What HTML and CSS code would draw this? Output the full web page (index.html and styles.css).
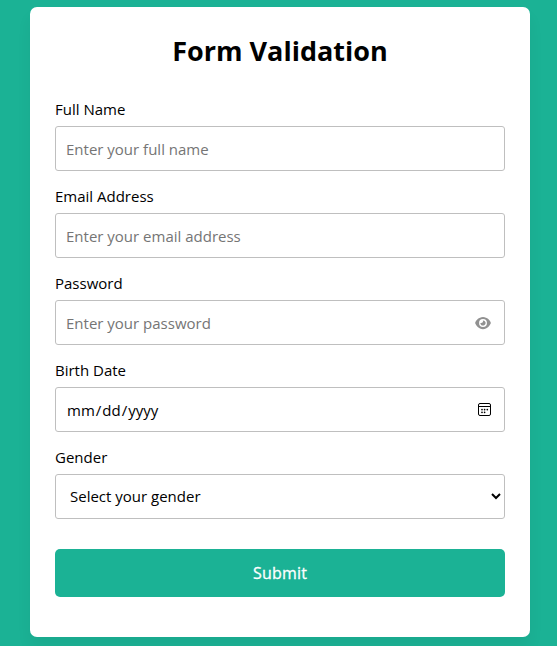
FILE: index.html
```html
<!DOCTYPE html>
<html lang="en">
<head>
<meta charset="utf-8">
<title>Form Validation</title>
<link rel="stylesheet" href="styles.css">
</head>
<body>
<form class="form" novalidate>
  <h2 class="title">Form Validation</h2>
  <div class="group">
    <label for="fullname">Full Name</label>
    <input type="text" id="fullname" placeholder="Enter your full name">
  </div>
  <div class="group">
    <label for="email">Email Address</label>
    <input type="text" id="email" placeholder="Enter your email address">
  </div>
  <div class="group">
    <label for="password">Password</label>
    <div class="field">
      <input type="password" id="password" placeholder="Enter your password">
      <svg class="eye" viewBox="0 0 576 512"><path fill="currentColor" d="M288 32c-80.800 0-145.500 36.800-192.600 80.600C48.600 156 17.300 208 2.500 243.700c-3.300 7.900-3.300 16.700 0 24.600C17.300 304 48.600 356 95.400 399.400 142.500 443.200 207.200 480 288 480s145.500-36.800 192.600-80.600c46.800-43.500 78.100-95.400 93-131.100 3.300-7.900 3.300-16.700 0-24.600-14.900-35.700-46.200-87.700-93-131.100C433.500 68.800 368.800 32 288 32zM144 256a144 144 0 1 1 288 0 144 144 0 1 1-288 0zm144-64c0 35.300-28.700 64-64 64-7.100 0-13.900-1.200-20.300-3.300-5.500-1.800-11.900 1.600-11.700 7.400.3 6.900 1.300 13.800 3.200 20.700 13.700 51.200 66.400 81.600 117.600 67.900s81.600-66.400 67.900-117.600c-11.100-41.500-47.800-69.400-88.600-71.100-5.800-.2-9.200 6.100-7.400 11.700 2.100 6.400 3.300 13.200 3.300 20.300z"/></svg>
    </div>
  </div>
  <div class="group">
    <label for="date">Birth Date</label>
    <div class="control date" id="date">
      <span class="parts"><span class="part">mm</span>/<span class="part">dd</span>/<span class="part">yyyy</span></span>
      <svg class="calendar" viewBox="0 0 13 13"><rect x=".5" y=".5" width="12" height="12" rx="1.500" fill="none" stroke="currentColor"/><path d="M1 3.500h11" stroke="currentColor"/><g fill="currentColor"><circle cx="4" cy="6.600" r=".85"/><circle cx="6.600" cy="6.600" r=".85"/><circle cx="9.300" cy="6.600" r=".85"/><circle cx="4" cy="9.300" r=".85"/><circle cx="6.600" cy="9.300" r=".85"/></g></svg>
    </div>
  </div>
  <div class="group">
    <label for="gender">Gender</label>
    <select id="gender"><option>Select your gender</option><option>Male</option><option>Female</option><option>Other</option></select>
  </div>
  <button class="submit" type="button">Submit</button>
</form>
</body>
</html>
```
FILE: styles.css
```css
* { box-sizing: border-box; margin: 0; padding: 0; font-family: "Open Sans", sans-serif; }
body { background: #1bb295; padding: 7px 0 0 30px; min-height: 100vh; }
.form { width: 500px; height: 630px; padding: 25px; background: #fff; border-radius: 7px; box-shadow: 0 10px 15px rgba(0,0,0,.05); }
.title { font-size: 27px; line-height: 37px; font-weight: 700; text-align: center; margin-bottom: 30px; }
.group { display: flex; flex-direction: column; margin-bottom: 15px; }
label { font-size: 15px; line-height: 20px; margin-bottom: 7px; }
input, select, .control { width: 100%; height: 45px; padding: 10px; font-size: 15px; border: 1px solid #bfbfbf; border-radius: 3px; background: #fff; color: #000; outline: none; }
select { padding: 9px 10px 11px; }
.field { position: relative; }
.eye { position: absolute; right: 14px; top: 16px; width: 16px; height: 14px; color: #919191; }
.date { display: flex; align-items: center; justify-content: space-between; padding-right: 13px; }
.part { padding: 0 1px; }
.calendar { width: 13px; height: 13px; margin-bottom: 1px; }
.submit { width: 100%; height: 48px; margin-top: 15px; border: none; border-radius: 5px; background: #1bb295; color: #fff; font-size: 16px; font-weight: 500; letter-spacing: .2px; -webkit-text-stroke: .3px #fff; }
```
